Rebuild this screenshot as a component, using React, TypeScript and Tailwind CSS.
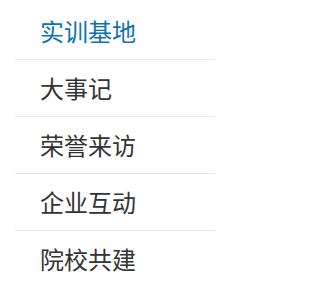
import React from "react";

const items = ["实训基地", "大事记", "荣誉来访", "企业互动", "院校共建"];

export default function App() {
  return (
    <div className="w-[234px] h-[286px] overflow-hidden bg-white" style={{ fontFamily: '"Noto Sans CJK SC", "Noto Sans", sans-serif' }}>
      <ul className="ml-[15px] w-[200px] pt-[3px]">
        {items.map((t, i) => (
          <li
            key={t}
            className={
              "h-[57px] flex items-center pl-[25px] text-[24px] leading-none border-b border-[#e8e8e8] " +
              (i === 0 ? "text-[#0e72b0]" : "text-[#333333]")
            }
          >
            {t}
          </li>
        ))}
      </ul>
    </div>
  );
}
